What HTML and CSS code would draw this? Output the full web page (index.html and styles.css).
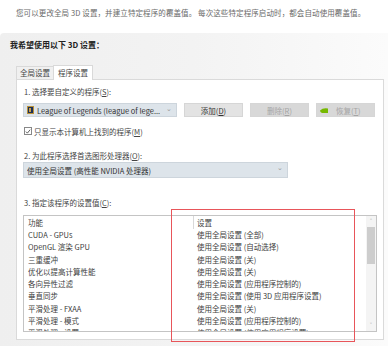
FILE: index.html
```html
<!DOCTYPE html>
<html lang="zh-CN">
<head>
<meta charset="utf-8">
<link rel="stylesheet" href="styles.css">
</head>
<body>
<div class="intro">您可以更改全局 3D 设置，并建立特定程序的覆盖值。 每次这些特定程序启动时，都会自动使用覆盖值。</div>
<div class="main">
  <div class="heading">我希望使用以下 3D 设置：</div>
  <div class="tabs">
    <div class="tab">全局设置</div>
    <div class="tab active">程序设置</div>
  </div>
  <div class="panel">
    <div class="label l1">1. 选择要自定义的程序(<u>S</u>):</div>
    <div class="row1">
      <div class="select sel1">
        <svg class="lol" width="7" height="8" viewBox="0 0 7 8"><rect x="0.5" y="0.5" width="6" height="7" fill="#1d2f55" stroke="#b8913a"/><rect x="2" y="2" width="2" height="4" fill="#c9a14a"/></svg>
        <span class="seltext">League of Legends (league of lege...</span>
        <span class="chev">&#8964;</span>
      </div>
      <div class="btn">添加(<u>D</u>)</div>
      <div class="btn disabled">删除(<u>R</u>)</div>
      <div class="btn disabled restore"><svg width="8" height="5" viewBox="0 0 8 5"><path d="M0 2.5 Q3 -0.5 8 0.5 L8 5 L2 5 Q0 4 0 2.5Z" fill="#76b900"/></svg><span>恢复(<u>T</u>)</span></div>
    </div>
    <div class="check-row">
      <span class="checkbox"><svg width="7" height="7" viewBox="0 0 7 7"><path d="M1 3.6 L2.8 5.4 L6 1.4" fill="none" stroke="#333" stroke-width="0.9"/></svg></span>
      <span>只显示本计算机上找到的程序(<u>M</u>)</span>
    </div>
    <div class="label l2">2. 为此程序选择首选图形处理器(<u>O</u>):</div>
    <div class="select sel2">
      <span class="seltext">使用全局设置 (高性能 NVIDIA 处理器)</span>
      <span class="chev">&#8964;</span>
    </div>
    <div class="label l3">3. 指定该程序的设置值(<u>C</u>):</div>
    <div class="list">
      <div class="cols">
        <div class="col c1">
          <div class="hd">功能</div>
          <div>CUDA - GPUs</div>
          <div>OpenGL 渲染 GPU</div>
          <div>三重缓冲</div>
          <div>优化以提高计算性能</div>
          <div>各向异性过滤</div>
          <div>垂直同步</div>
          <div>平滑处理 - FXAA</div>
          <div>平滑处理 - 模式</div>
          <div>平滑处理 - 设置</div>
        </div>
        <div class="col c2">
          <div class="hd">设置</div>
          <div>使用全局设置 (全部)</div>
          <div>使用全局设置 (自动选择)</div>
          <div>使用全局设置 (关)</div>
          <div>使用全局设置 (关)</div>
          <div>使用全局设置 (应用程序控制的)</div>
          <div>使用全局设置 (使用 3D 应用程序设置)</div>
          <div>使用全局设置 (关)</div>
          <div>使用全局设置 (应用程序控制的)</div>
          <div>使用全局设置 (使用应用程序设置)</div>
        </div>
      </div>
      <div class="scrollbar">
        <div class="arrow">&#708;</div>
        <div class="thumb"></div>
        <div class="track"></div>
        <div class="arrow">&#709;</div>
      </div>
    </div>
  </div>
  <div class="redbox"></div>
</div>
</body>
</html>
```
FILE: styles.css
```css
html, body {
  margin: 0;
  padding: 0;
}
body {
  width: 388px;
  height: 346px;
  overflow: hidden;
  background: #ffffff;
  font-family: "Noto Sans CJK SC", "Noto Sans", sans-serif;
  font-size: 7.5px;
  color: #3a3a3a;
  position: relative;
}
u { text-decoration: underline; text-underline-offset: 1px; }
.intro {
  height: 33px;
  box-sizing: border-box;
  padding: 7px 0 0 16px;
  line-height: 12px;
  color: #6a6a6a;
  letter-spacing: 0.1px;
  white-space: nowrap;
}
.main {
  height: 313px;
  box-sizing: border-box;
  background: linear-gradient(to right, #efefef 0%, #f3f3f3 50%, #fbfbfb 100%);
  border-top-left-radius: 4px;
  padding: 6px 4px 0 10px;
  display: flex;
  flex-direction: column;
}
.heading {
  font-size: 8px;
  font-weight: bold;
  color: #222;
  line-height: 12px;
  height: 12px;
}
.tabs {
  margin-top: 14px;
  margin-left: 6px;
  display: flex;
  align-items: flex-end;
  height: 14px;
  position: relative;
  z-index: 1;
}
.tab {
  height: 12px;
  line-height: 12px;
  padding: 0 3px;
  border: 1px solid #d9d9d9;
  border-bottom: none;
  background: #f0f0f0;
  color: #444;
  box-sizing: content-box;
}
.tab.active {
  height: 14px;
  line-height: 13px;
  background: #fff;
  margin-left: -1px;
  padding: 0 4px;
  margin-bottom: -1px;
}
.panel {
  margin-left: 6px;
  width: 368px;
  height: 261px;
  box-sizing: border-box;
  background: #fff;
  border: 1px solid #dadada;
  padding: 6px 0 0 6px;
  display: flex;
  flex-direction: column;
}
.label {
  line-height: 12px;
  padding-left: 1px;
  color: #444;
}
.row1 {
  margin-top: 5px;
  display: flex;
  gap: 7px;
  height: 14px;
}
.select {
  display: flex;
  align-items: center;
  background: #dde4ea;
  border: 1px solid #cdd5dc;
  box-sizing: border-box;
  height: 14px;
  padding-left: 3px;
  position: relative;
  color: #333;
}
.sel1 { width: 154px; }
.lol { margin-right: 3px; flex: none; }
.seltext { white-space: nowrap; overflow: hidden; font-size: 7.5px; }
.chev {
  position: absolute;
  right: 4px;
  top: -1px;
  color: #999;
  font-size: 7px;
}
.btn {
  width: 59px;
  height: 14px;
  box-sizing: border-box;
  background: #e3e3e3;
  border: 1px solid #d6d6d6;
  display: flex;
  align-items: center;
  justify-content: center;
  color: #333;
}
.btn.disabled {
  background: #d8d8d8;
  color: #a5a5a5;
}
.restore { gap: 6px; justify-content: flex-start; padding-left: 3px; }
.restore span { margin-left: 2px; }
.check-row {
  margin-top: 9px;
  display: flex;
  align-items: center;
  gap: 2px;
  height: 10px;
  padding-left: 1px;
  color: #444;
}
.checkbox {
  width: 8px;
  height: 8px;
  box-sizing: border-box;
  border: 1px solid #888;
  background: #fff;
  display: flex;
  align-items: center;
  justify-content: center;
}
.l2 { margin-top: 14px; }
.sel2 {
  margin-top: 0;
  width: 265px;
  height: 16px;
}
.l3 { margin-top: 19px; }
.list {
  margin-top: 6px;
  width: 354px;
  height: 117px;
  box-sizing: border-box;
  border: 1px solid #c4c4c4;
  display: flex;
  overflow: hidden;
}
.cols {
  flex: 1;
  display: flex;
  overflow: hidden;
}
.col {
  line-height: 12.3px;
  white-space: nowrap;
  color: #404040;
}
.col .hd { line-height: 13px; height: 13px; margin-bottom: 0; }
.c1 { width: 166px; padding-left: 4px; }
.c2 { padding-left: 3px; }
.c2 .hd { border-left: 1px solid #d9d9d9; margin-left: -4px; padding-left: 3px; }
.scrollbar {
  width: 10px;
  display: flex;
  flex-direction: column;
  align-items: center;
  background: #f4f4f4;
  margin: 0 0 0 0;
}
.arrow {
  height: 11px;
  line-height: 11px;
  font-size: 7px;
  color: #999;
}
.thumb {
  width: 8px;
  height: 37px;
  background: #cdcdcd;
}
.track { flex: 1; }
.redbox {
  position: absolute;
  left: 171px;
  top: 209px;
  width: 184px;
  height: 133px;
  box-sizing: border-box;
  border: 1.5px solid #e8555a;
  pointer-events: none;
}
```
